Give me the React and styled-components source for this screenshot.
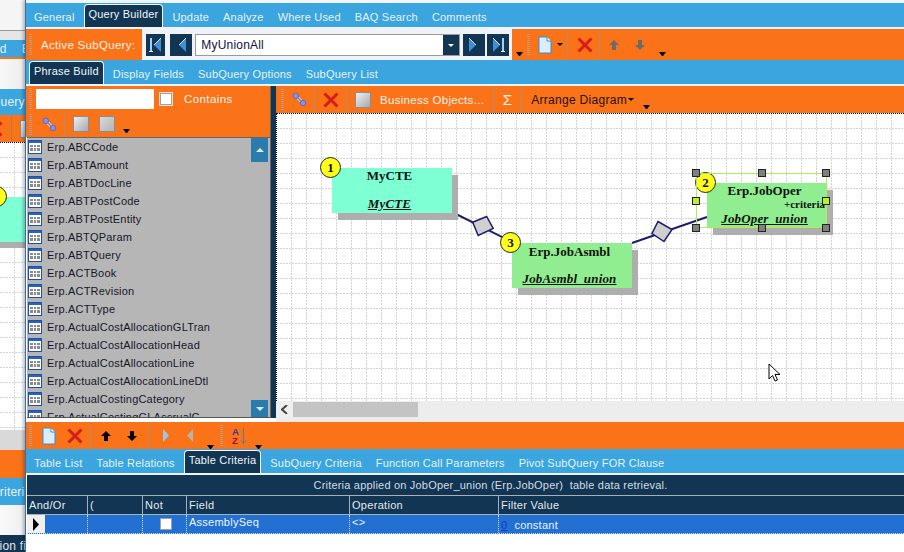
import React from 'react'
import styled, { createGlobalStyle } from 'styled-components'

const ORANGE = '#fa7319'
const BLUE = '#3aa5de'
const NAVY = '#113552'

const GlobalStyle = createGlobalStyle`
  html, body { margin: 0; padding: 0; background: #fff; overflow: hidden; }
  body { font-family: "Liberation Sans", Arial, sans-serif; font-size: 11px; letter-spacing: .2px; }
`

const Page = styled.div`
  display: flex;
  width: 904px;
  height: 552px;
  overflow: hidden;
`

/* window behind the main one */
const BackWindow = styled.div`
  width: 25px;
  flex: none;
  display: flex;
  flex-direction: column;
  overflow: hidden;
`

const BackStrip = styled.div`
  height: ${p => p.$h}px;
  flex: none;
  background: ${p => p.$bg};
  color: ${p => p.$color || '#e6f3fb'};
  border-bottom: ${p => p.$bottom || 'none'};
  padding-top: ${p => p.$pt || 0}px;
  display: flex;
  align-items: center;
  white-space: nowrap;
  overflow: hidden;
  box-sizing: border-box;
  font-size: ${p => p.$size || 11}px;
`

const BackText = styled.span`
  margin-left: ${p => p.$off}px;
  flex: none;
  display: flex;
  align-items: center;
`

const BackCanvas = styled.div`
  height: 287px;
  flex: none;
  position: relative;
  overflow: hidden;
  background: #fff;
  border-top: 1px dotted #000;
`

const BackSep = styled.i`
  width: 1px;
  height: 24px;
  background: #b5793f;
  flex: none;
`

const BackButton = styled.i`
  width: 12px;
  height: 16px;
  margin-left: 8px;
  flex: none;
  background: linear-gradient(135deg, #eee, #aaa);
  border: 1px solid #888;
`

const BackNode = styled.div`
  position: absolute;
  left: -20px;
  top: 54px;
  width: 46px;
  height: 45px;
  background: #7fffd4;
  box-shadow: 6px 6px 0 #aeaeae;
`

const BackBadge = styled.div`
  position: absolute;
  left: -14px;
  top: 43px;
  width: 19px;
  height: 19px;
  border-radius: 50%;
  background: #ffff1e;
  border: 1px solid #222;
`

/* main window */
const FrontWindow = styled.div`
  flex: 1;
  min-width: 0;
  display: flex;
  flex-direction: column;
  background: #fff;
  border-left: 1px solid #3a6ea5;
  box-shadow: -2px 0 3px rgba(0, 0, 0, .25);
  z-index: 1;
`

const TopEdge = styled.div`
  height: 3px;
  flex: none;
  background: #f2f6f8;
`

const TabBar = styled.div`
  display: flex;
  align-items: flex-end;
  gap: 4px;
  height: 24px;
  flex: none;
  padding-left: 3px;
  background: ${BLUE};
  border-bottom: 2px solid #eef4f7;
`

const Tab = styled.div`
  height: ${p => (p.$active ? 23 : 21)}px;
  padding: ${p => (p.$active ? '0 4px 4px' : '0 4px 0')};
  display: flex;
  align-items: center;
  box-sizing: border-box;
  white-space: nowrap;
  color: ${p => (p.$active ? '#f2f7fa' : '#e6f3fb')};
  background: ${p => (p.$active ? NAVY : 'transparent')};
  border: ${p => (p.$active ? '1px solid #f4f8fb' : '1px solid transparent')};
  border-bottom: none;
  border-radius: ${p => (p.$active ? '4px 4px 0 0' : '0')};
`

const Toolbar = styled.div`
  display: flex;
  align-items: center;
  height: ${p => p.$h || 27}px;
  flex: none;
  background: ${ORANGE};
  color: #fdf2e9;
`

const Gripper = styled.i`
  width: 3px;
  height: 21px;
  margin: 0 ${p => p.$right ?? 4}px 0 ${p => p.$left ?? 3}px;
  flex: none;
  background: repeating-linear-gradient(#c89878 0 1px, transparent 1px 2px);
`

const Sep = styled.i`
  width: 1px;
  height: 24px;
  flex: none;
  background: #b48a70;
`

const Slot = styled.div`
  width: ${p => p.$w}px;
  flex: none;
  display: flex;
  align-items: center;
  justify-content: center;
  height: 100%;
`

const Overflow = styled.i`
  width: 7px;
  height: 4px;
  flex: none;
  align-self: flex-end;
  margin-bottom: ${p => p.$b ?? 4}px;
  border-left: 3.5px solid transparent;
  border-right: 3.5px solid transparent;
  border-top: 4px solid #000;
  box-sizing: border-box;
`

const Caret = styled.i`
  flex: none;
  border-left: ${p => p.$size || 3}px solid transparent;
  border-right: ${p => p.$size || 3}px solid transparent;
  border-top: ${p => (p.$up ? 'none' : `${p.$size || 3}px solid ${p.$color || '#000'}`)};
  border-bottom: ${p => (p.$up ? `${p.$size || 3}px solid ${p.$color || '#000'}` : 'none')};
`

const Label = styled.span`
  color: ${p => p.$color || '#fdf2e9'};
  font-size: ${p => p.$size || 11.5}px;
  letter-spacing: ${p => p.$ls || '.3px'};
  white-space: nowrap;
  margin-left: ${p => p.$left || 0}px;
  flex: none;
`

const SquareBtn = styled.i`
  display: block;
  width: 16px;
  height: 16px;
  box-sizing: border-box;
  flex: none;
  border: 1px solid #8d8d8d;
  background: linear-gradient(135deg, ${p => (p.$dim ? '#d8d8d8, #b4b4b4' : '#f0f0f4, #a8a8ac')});
`

const NavPanel = styled.div`
  display: flex;
  align-items: center;
  gap: 2px;
  width: 370px;
  height: 100%;
  flex: none;
  box-sizing: border-box;
  padding: 1px 0 0 4px;
  margin-left: 7px;
  background: #f0f2f7;
`

const NavButton = styled.div`
  width: ${p => p.$w || 22}px;
  height: 22px;
  flex: none;
  margin-right: ${p => p.$right || 0}px;
  background: ${NAVY};
  display: flex;
  align-items: center;
  justify-content: center;
`

const Combo = styled.div`
  width: 265px;
  height: 22px;
  margin: 0 1px;
  flex: none;
  display: flex;
  box-sizing: border-box;
  background: #fff;
  border: 1px solid #9a9a9a;
  color: #101040;
  font-size: 12px;
  letter-spacing: .2px;
`

const ComboText = styled.span`
  flex: 1;
  padding-left: 5px;
  line-height: 20px;
`

const ComboArrow = styled.div`
  width: 16px;
  background: ${NAVY};
  display: flex;
  align-items: center;
  justify-content: center;
`

const MainArea = styled.div`
  display: flex;
  height: 336px;
  flex: none;
`

const LeftPanel = styled.div`
  width: 244px;
  flex: none;
  display: flex;
  flex-direction: column;
  background: #fff;
`

const SearchBox = styled.div`
  width: 118px;
  height: 20px;
  background: #fff;
  flex: none;
`

const CheckBox = styled.i`
  width: 12px;
  height: 12px;
  flex: none;
  margin-left: ${p => p.$left || 0}px;
  background: #fff;
  border: 1px solid #a0a0a0;
  box-sizing: border-box;
  box-shadow: ${p => (p.$soft ? '0 0 0 1px #f5e0d0' : 'none')};
`

const ListWrap = styled.div`
  height: 279px;
  flex: none;
  display: flex;
  margin-left: 1px;
  background: #b6b6b6;
  border-bottom: 1px solid #555;
  border-top: 1px solid #666;
  overflow: hidden;
`

const ListRows = styled.div`
  flex: 1;
  min-width: 0;
  overflow: hidden;
`

const ListRow = styled.div`
  height: 18px;
  display: flex;
  align-items: center;
  gap: 5px;
  padding-left: 1px;
  color: #16162a;
  white-space: nowrap;
`

const ScrollCol = styled.div`
  width: 17px;
  flex: none;
  margin-right: 2px;
  display: flex;
  flex-direction: column;
  justify-content: space-between;
`

const ScrollBtn = styled.div`
  height: ${p => p.$h}px;
  background: #2a7cad;
  display: flex;
  align-items: center;
  justify-content: center;
`

const Splitter = styled.div`
  width: 5px;
  height: 332px;
  flex: none;
  background: ${NAVY};
  border-left: 1px solid #666;
`

const RightPanel = styled.div`
  flex: 1;
  min-width: 0;
  display: flex;
  flex-direction: column;
  background: #ededed;
`

const Canvas = styled.div`
  height: 287px;
  flex: none;
  position: relative;
  overflow: hidden;
  background: #fff;
  border-top: 1px dotted #000;
  border-left: 1px dotted #000;
`

const CanvasArt = styled.svg`
  position: absolute;
  inset: 0;
  width: 100%;
  height: 100%;
`

const Node = styled.div`
  position: absolute;
  left: ${p => p.$x}px;
  top: ${p => p.$y}px;
  width: 120px;
  height: 45px;
  box-sizing: border-box;
  padding-right: 5px;
  background: ${p => p.$bg};
  box-shadow: 6px 7px 0 #aeaeae;
  font-family: "Liberation Serif", "Times New Roman", serif;
  font-weight: bold;
  font-size: 13px;
  letter-spacing: 0;
  color: #111;
  text-align: center;
`

const NodeTitle = styled.div`
  line-height: 15px;
  padding-top: ${p => p.$top}px;
`

const NodeAlias = styled.div`
  position: absolute;
  left: 0;
  right: 5px;
  bottom: 1px;
  font-style: italic;
  letter-spacing: .15px;
  text-decoration: underline;
  line-height: 16px;
`

const NodeNote = styled.div`
  position: absolute;
  right: 2px;
  top: 15px;
  font-size: 11px;
  line-height: 12px;
`

const Badge = styled.div`
  position: absolute;
  left: -12px;
  top: -11px;
  width: 21px;
  height: 21px;
  box-sizing: border-box;
  border-radius: 50%;
  background: #ffff1e;
  border: 1px solid #222;
  display: flex;
  align-items: center;
  justify-content: center;
  font-size: 13px;
  line-height: 1;
`

const Selection = styled.div`
  position: absolute;
  left: 419px;
  top: 59px;
  width: 131px;
  height: 55px;
  box-sizing: border-box;
  border: 1px solid #aeee4c;
`

const Handle = styled.i`
  position: absolute;
  left: ${p => p.$x}px;
  top: ${p => p.$y}px;
  width: 8px;
  height: 8px;
  box-sizing: border-box;
  background: ${p => (p.$green ? '#b8f030' : '#808080')};
  border: 1px solid #222;
`

const Cursor = styled.svg`
  position: absolute;
  left: 491px;
  top: 249px;
`

const HScroll = styled.div`
  display: flex;
  height: 15px;
  margin-top: 1px;
  flex: none;
`

const HScrollBtn = styled.div`
  width: 17px;
  display: flex;
  align-items: center;
  justify-content: center;
  background: #efefef;
`

const HThumb = styled.div`
  width: 125px;
  background: #c4c4c4;
`

const Grid = styled.div`
  display: flex;
  flex-direction: column;
  margin-left: 1px;
`

const Caption = styled.div`
  height: 20px;
  background: ${NAVY};
  color: #d4dde4;
  text-align: center;
  line-height: 20px;
  white-space: pre;
  padding-left: 50px;
`

const GridRow = styled.div`
  display: grid;
  grid-template-columns: 60px 55px 44px 163px 149px 1fr;
  height: ${p => p.$h}px;
  background: ${p => p.$bg};
  color: ${p => p.$color};
  border-top: ${p => p.$top || 'none'};
  border-bottom: ${p => p.$bottom || 'none'};
`

const HeadCell = styled.div`
  padding-left: 2px;
  line-height: 19px;
  letter-spacing: .3px;
  border-left: ${p => (p.$first ? 'none' : '1px solid #a8b0b6')};
`

const Cell = styled.div`
  display: flex;
  align-items: ${p => p.$align || 'flex-start'};
  justify-content: ${p => p.$justify || 'flex-start'};
  gap: 7px;
  padding-left: ${p => (p.$first ? 0 : 2)}px;
  line-height: 15px;
  letter-spacing: .25px;
  border-left: ${p => (p.$first ? 'none' : '1px dotted #cfe0f5')};
`

const RowHead = styled.div`
  width: 18px;
  height: 100%;
  background: #f0f0f0;
  display: flex;
  align-items: center;
  justify-content: center;
`

const ZeroLink = styled.span`
  color: #1533d6;
  text-decoration: underline;
`

const Bottom = styled.div`
  flex: 1;
  background: #fff;
`

/* icons */
const NewIcon = () => (
  <svg width="14" height="18" viewBox="0 0 14 18">
    <path d="M1 1h8l4 4v12H1z" fill="#dbeefb" stroke="#2f8fe0" />
    <path d="M9 1v4h4" fill="#fff" stroke="#2f8fe0" />
  </svg>
)

const RedX = () => (
  <svg width="16" height="16" viewBox="0 0 16 16">
    <path d="M1.5 1.5l13 13M14.5 1.5l-13 13" stroke="#d81c1c" strokeWidth="3" />
  </svg>
)

const LinkIcon = () => (
  <svg width="15" height="15" viewBox="0 0 15 15">
    <path d="M4 4l7 7" stroke="#e8e4ff" strokeWidth="3" />
    <circle cx="3.8" cy="3.8" r="2.8" fill="#8f8fe0" stroke="#6666bb" />
    <circle cx="11" cy="11" r="2.8" fill="#8f8fe0" stroke="#6666bb" />
    <path d="M5 5l5 5" stroke="#5a8ac8" strokeWidth="1.5" />
  </svg>
)

const TableIcon = () => (
  <svg width="14" height="14" viewBox="0 0 14 14">
    <rect x=".5" y=".5" width="13" height="13" fill="#fff" stroke="#1f4fa8" />
    <rect x="1" y="1" width="12" height="2" fill="#2a62c0" />
    <path d="M2 5h3v2H2zM6 5h2v2H6zM9 5h3v2H9zM2 8h3v3H2zM6 8h2v3H6zM9 8h3v3H9z" fill="#8a8a8a" />
  </svg>
)

const ArrowIcon = ({ down, color }) => (
  <svg width="10" height="10" viewBox="0 0 10 10">
    <path d={down ? 'M3 0h4v5h3l-5 5-5-5h3z' : 'M5 0l5 5H7v5H3V5H0z'} fill={color} />
  </svg>
)

const Tri = ({ left, color }) => (
  <svg width="6" height="13" viewBox="0 0 6 13">
    <path d={left ? 'M6 0v13L0 6.500z' : 'M0 0v13l6-6.500z'} fill={color} />
  </svg>
)

const NavIcon = ({ kind }) => {
  const left = kind === 'first' || kind === 'prev'
  const bar = kind === 'first' || kind === 'last'
  return (
    <svg width="16" height="16" viewBox="0 0 16 16">
      <path d={left ? 'M13 1v14L6 8z' : 'M3 1v14l7-7z'} fill="#3f8fd8" />
      <path d={left ? 'M6 8l7-7' : 'M3 1l7 7'} stroke="#cfe8fb" />
      {bar && <rect x={left ? 2 : 12} y="1" width="2" height="14" fill="#9cd2f7" />}
      {bar && <rect x={left ? 1 : 11} y="14" width="4" height="1" fill="#fff" />}
    </svg>
  )
}

const SortIcon = () => (
  <svg width="16" height="18" viewBox="0 0 16 18" fontFamily="Liberation Sans, sans-serif" fontSize="9.5" fontWeight="bold">
    <text x="0" y="8" fill="#2a3aa8">A</text>
    <text x="0" y="17" fill="#9a1040">Z</text>
    <path d="M11.5 1v15M9 13.500l2.500 3 2.500-3" stroke="#5a7a9a" fill="none" />
  </svg>
)

const GridPattern = ({ id }) => (
  <defs>
    <pattern id={id} width="15" height="15" patternUnits="userSpaceOnUse">
      <path d="M14.5 0V15M0 14.5H15" stroke="#d2d2d2" strokeDasharray="2 1" shapeRendering="crispEdges" />
    </pattern>
  </defs>
)

const topTabs = ['General', 'Query Builder', 'Update', 'Analyze', 'Where Used', 'BAQ Search', 'Comments']
const subTabs = ['Phrase Build', 'Display Fields', 'SubQuery Options', 'SubQuery List']
const bottomTabs = ['Table List', 'Table Relations', 'Table Criteria', 'SubQuery Criteria', 'Function Call Parameters', 'Pivot SubQuery FOR Clause']

const tables = [
  'ABCCode', 'ABTAmount', 'ABTDocLine', 'ABTPostCode', 'ABTPostEntity', 'ABTQParam', 'ABTQuery', 'ACTBook',
  'ACTRevision', 'ACTType', 'ActualCostAllocationGLTran', 'ActualCostAllocationHead', 'ActualCostAllocationLine',
  'ActualCostAllocationLineDtl', 'ActualCostingCategory', 'ActualCostingGLAccrualC',
]

const handles = [
  [-5, -5], [61, -5], [125, -5], [-5, 23, true], [125, 23, true], [-5, 50], [61, 50], [125, 50],
]

const Tabs = ({ items, active }) => (
  <TabBar>
    {items.map(t => <Tab key={t} $active={t === active}>{t}</Tab>)}
  </TabBar>
)

function App() {
  return (
    <Page>
      <GlobalStyle />
      <BackWindow>
        <BackStrip $h={31} $bg="#f5f5f5" $bottom="1px solid #999" />
        <BackStrip $h={9} $bg="#e6e6e6" />
        <BackStrip $h={19} $bg={BLUE} $bottom={`2px solid ${ORANGE}`} $size={12}>
          <BackText $off={-21}>Build</BackText>
          <BackText $off={15}>Edit</BackText>
        </BackStrip>
        <BackStrip $h={30} $bg="linear-gradient(90deg, #f8f8f8, #ececec)" />
        <BackStrip $h={26} $bg={BLUE} $size={12}>
          <BackText $off={-9}>Query I</BackText>
        </BackStrip>
        <BackStrip $h={27} $bg={ORANGE}>
          <BackText $off={-13}><RedX /></BackText>
          <BackText $off={8}><BackSep /></BackText>
          <BackButton />
        </BackStrip>
        <BackCanvas>
          <CanvasArt>
            <GridPattern id="backdots" />
            <rect width="100%" height="100%" fill="url(#backdots)" />
          </CanvasArt>
          <BackNode />
          <BackBadge />
        </BackCanvas>
        <BackStrip $h={20} $bg="#d9d9d9" />
        <BackStrip $h={28} $bg={ORANGE} />
        <BackStrip $h={27} $bg={BLUE} $size={12}>
          <BackText $off={-9}>Criteria</BackText>
        </BackStrip>
        <BackStrip $h={30} $bg="linear-gradient(90deg, #fafafa, #eee)" />
        <BackStrip $h={17} $bg={NAVY} $color="#e0e6ea" $size={12} $pt={4}>
          <BackText $off={-35}>Selection field</BackText>
        </BackStrip>
      </BackWindow>

      <FrontWindow>
        <TopEdge />
        <Tabs items={topTabs} active="Query Builder" />

        <Toolbar $h={31}>
          <Gripper $right={9} />
          <Label>Active SubQuery:</Label>
          <NavPanel>
            <NavButton $w={19} $right={3}><NavIcon kind="first" /></NavButton>
            <NavButton><NavIcon kind="prev" /></NavButton>
            <Combo>
              <ComboText>MyUnionAll</ComboText>
              <ComboArrow><Caret $color="#fff" /></ComboArrow>
            </Combo>
            <NavButton><NavIcon kind="next" /></NavButton>
            <NavButton><NavIcon kind="last" /></NavButton>
          </NavPanel>
          <Slot $w={14}><Overflow /></Slot>
          <Gripper $left={1} $right={5} />
          <Slot $w={20}><NewIcon /></Slot>
          <Slot $w={10}><Caret /></Slot>
          <Slot $w={5}><Sep /></Slot>
          <Slot $w={29}><RedX /></Slot>
          <Sep />
          <Slot $w={28}><ArrowIcon color="#6b6b6b" /></Slot>
          <Slot $w={24}><ArrowIcon down color="#6b6b6b" /></Slot>
          <Slot $w={20}><Overflow /></Slot>
        </Toolbar>

        <Tabs items={subTabs} active="Phrase Build" />

        <MainArea>
          <LeftPanel>
            <Toolbar $h={25}>
              <Gripper $right={4} />
              <SearchBox />
              <CheckBox $left={6} $soft />
              <Label $left={12} $ls=".4px">Contains</Label>
            </Toolbar>
            <Toolbar $h={26}>
              <Gripper $right={10} />
              <LinkIcon />
              <Slot $w={7} />
              <Sep />
              <Slot $w={32}><SquareBtn /></Slot>
              <Slot $w={20}><SquareBtn $dim /></Slot>
              <Slot $w={18}><Overflow /></Slot>
            </Toolbar>
            <ListWrap>
              <ListRows>
                {tables.map(t => (
                  <ListRow key={t}><TableIcon />Erp.{t}</ListRow>
                ))}
              </ListRows>
              <ScrollCol>
                <ScrollBtn $h={24}><Caret $up $size={4} $color="#dfe9ef" /></ScrollBtn>
                <ScrollBtn $h={17}><Caret $size={4} $color="#dfe9ef" /></ScrollBtn>
              </ScrollCol>
            </ListWrap>
          </LeftPanel>
          <Splitter />
          <RightPanel>
            <Toolbar $h={27}>
              <Gripper $left={5} $right={8} />
              <LinkIcon />
              <Slot $w={7} />
              <Sep />
              <Slot $w={31}><RedX /></Slot>
              <Sep />
              <Slot $w={32}><SquareBtn /></Slot>
              <Label $left={1}>Business Objects...</Label>
              <Slot $w={9} />
              <Sep />
              <Slot $w={27}><Label $size={15}>Σ</Label></Slot>
              <Sep />
              <Label $left={9} $size={12} $color="#1c1208">Arrange Diagram</Label>
              <Slot $w={8}><Caret /></Slot>
              <Slot $w={22}><Overflow /></Slot>
            </Toolbar>
            <Canvas>
              <CanvasArt>
                <GridPattern id="dots" />
                <rect width="100%" height="100%" fill="url(#dots)" />
                <path d="M175 98l60 30M355 129l75-26" stroke="#1c1c6e" strokeWidth="2" fill="none" />
                <path d="M209.700 102.500l6.500 12-15 7-5.500-13.300z" fill="#cfcfcf" stroke="#1c1c6e" strokeWidth="1.500" />
                <path d="M381 107.500l14 8-8 12-12-8z" fill="#cfcfcf" stroke="#1c1c6e" strokeWidth="1.500" />
              </CanvasArt>
              <Node $x={55} $y={54} $bg="#7fffd4">
                <Badge>1</Badge>
                <NodeTitle $top={0}>MyCTE</NodeTitle>
                <NodeAlias>MyCTE</NodeAlias>
              </Node>
              <Node $x={235} $y={129} $bg="#90ee90">
                <Badge>3</Badge>
                <NodeTitle $top={1}>Erp.JobAsmbl</NodeTitle>
                <NodeAlias>JobAsmbl_union</NodeAlias>
              </Node>
              <Node $x={430} $y={69} $bg="#90ee90">
                <Badge>2</Badge>
                <NodeTitle $top={0}>Erp.JobOper</NodeTitle>
                <NodeNote>+criteria</NodeNote>
                <NodeAlias>JobOper_union</NodeAlias>
              </Node>
              <Selection>
                {handles.map(([x, y, green]) => (
                  <Handle key={`${x}-${y}`} $x={x} $y={y} $green={green} />
                ))}
              </Selection>
              <Cursor width="13" height="19" viewBox="0 0 13 19">
                <path d="M1 1v15l3.500-3.500 2.500 5.500 2.500-1-2.500-5.500h5z" fill="#fff" stroke="#000" />
              </Cursor>
            </Canvas>
            <HScroll>
              <HScrollBtn>
                <svg width="8" height="9" viewBox="0 0 8 9"><path d="M6 0L1 4.500 6 9" fill="none" stroke="#444" strokeWidth="2" /></svg>
              </HScrollBtn>
              <HThumb />
            </HScroll>
          </RightPanel>
        </MainArea>

        <Toolbar $h={27}>
          <Gripper $right={10} />
          <Slot $w={14}><NewIcon /></Slot>
          <Slot $w={11} />
          <Slot $w={16}><RedX /></Slot>
          <Slot $w={7} />
          <Sep />
          <Slot $w={30}><ArrowIcon color="#000" /></Slot>
          <Slot $w={22}><ArrowIcon down color="#000" /></Slot>
          <Slot $w={5} />
          <Sep />
          <Slot $w={34}><Tri color="#9cc6e6" /></Slot>
          <Slot $w={14}><Tri left color="#b5b5a8" /></Slot>
          <Slot $w={10} />
          <Slot $w={7}><Overflow $b={0} /></Slot>
          <Gripper $left={6} $right={9} />
          <SortIcon />
          <Slot $w={7} />
          <Slot $w={7}><Overflow $b={0} /></Slot>
        </Toolbar>

        <Tabs items={bottomTabs} active="Table Criteria" />

        <Grid>
          <Caption>Criteria applied on JobOper_union (Erp.JobOper)  table data retrieval.</Caption>
          <GridRow $h={18} $bg={NAVY} $color="#e4eaee" $top="1px solid #a8b0b6" $bottom="1px solid #a8b0b6">
            <HeadCell $first>And/Or</HeadCell>
            <HeadCell>(</HeadCell>
            <HeadCell>Not</HeadCell>
            <HeadCell>Field</HeadCell>
            <HeadCell>Operation</HeadCell>
            <HeadCell>Filter Value</HeadCell>
          </GridRow>
          <GridRow $h={18} $bg="#2170d2" $color="#f0f5fb" $bottom="1px dotted #cfe0f5">
            <Cell $first>
              <RowHead><Tri color="#000" /></RowHead>
            </Cell>
            <Cell />
            <Cell $align="center" $justify="center"><CheckBox /></Cell>
            <Cell>AssemblySeq</Cell>
            <Cell>{'<>'}</Cell>
            <Cell $align="flex-end"><ZeroLink>0</ZeroLink>constant</Cell>
          </GridRow>
        </Grid>
        <Bottom />
      </FrontWindow>
    </Page>
  )
}

export default App
